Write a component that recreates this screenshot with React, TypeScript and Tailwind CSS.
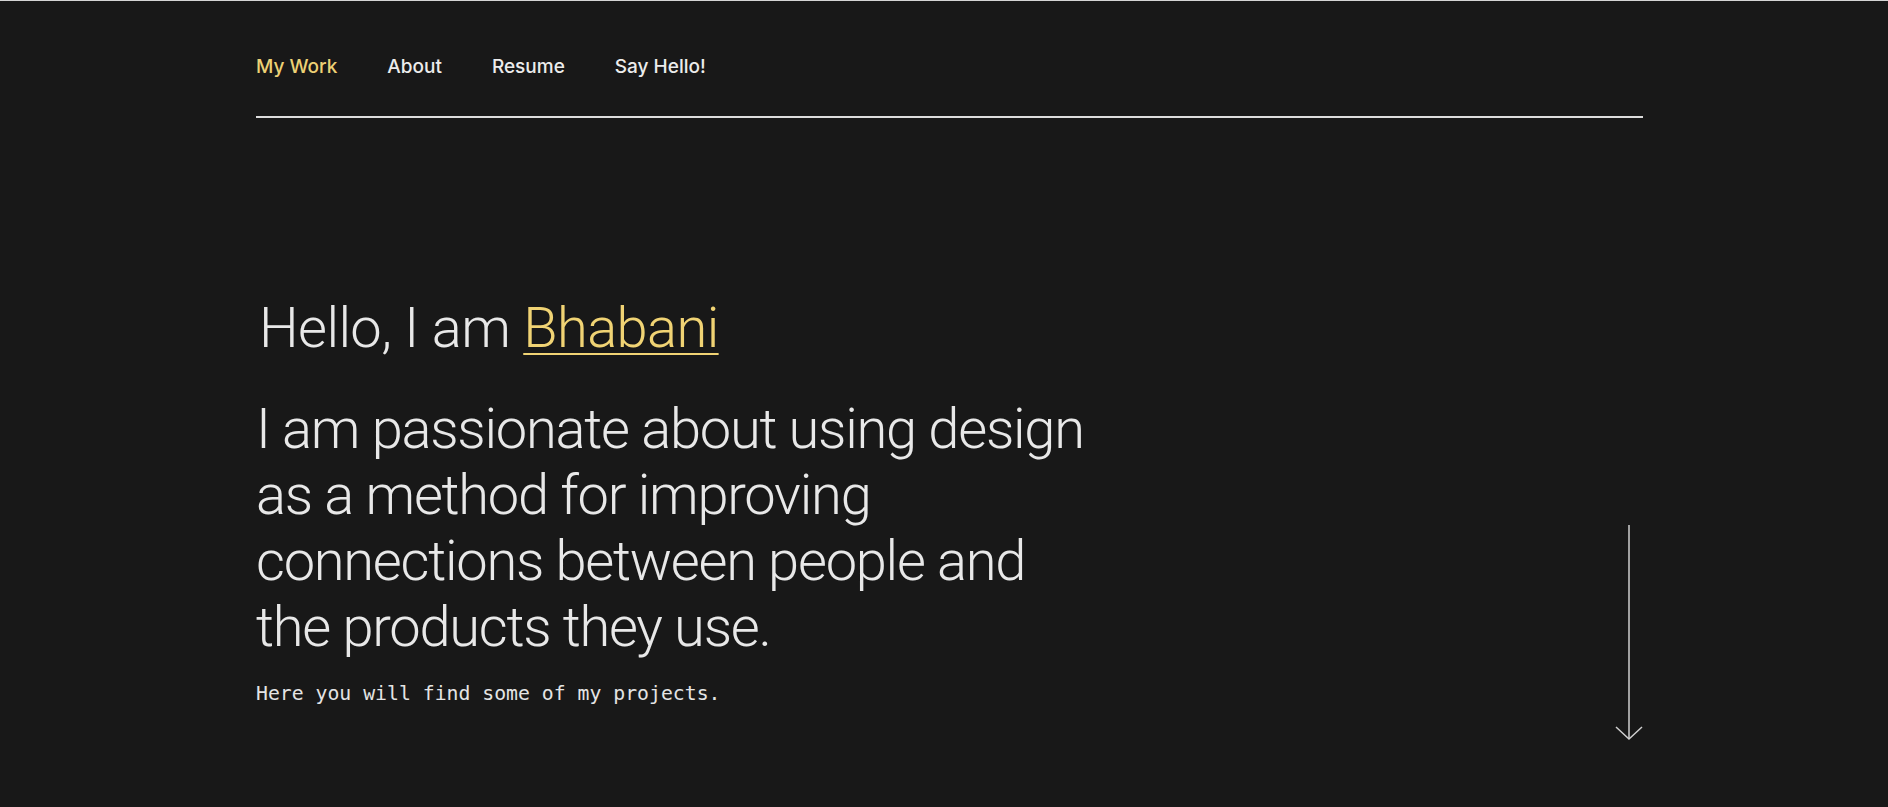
export default function App() {
  return (
    <div className="min-h-screen w-full bg-[#181818] border-t border-[#d4d4d4] font-['Roboto',sans-serif]">
      <div className="ml-[256px] w-[1387px]">
        <nav className="flex gap-[50px] pt-[52px] pb-[35px] border-b-2 border-[#dcdcdc] font-['Inter',sans-serif] text-[19px] leading-[28px] font-medium">
          <a className="text-[#ecd175]">My Work</a>
          <a className="text-[#ececec]">About</a>
          <a className="text-[#ececec]">Resume</a>
          <a className="text-[#ececec]">Say Hello!</a>
        </nav>
        <div className="flex justify-between">
          <div className="pt-[177px]">
            <h1 className="text-[56px] leading-[66px] font-light tracking-[-0.6px] text-[#e8e8e8] pl-[3px]">
              Hello, I am{" "}
              <span className="text-[#f0d374] underline decoration-2 underline-offset-[6px]">Bhabani</span>
            </h1>
            <p className="mt-[35px] text-[56px] leading-[66px] font-light tracking-[-1.25px] text-[#e8e8e8]">
              I am passionate about using design
              <br />
              as a method for improving
              <br />
              connections between people and
              <br />
              the products they use.
            </p>
            <p className="mt-[20px] font-['DejaVu_Sans_Mono',monospace] text-[19.8px] leading-[28px] text-[#e4e4e4]">
              Here you will find some of my projects.
            </p>
          </div>
          <svg
            className="mt-[407px] shrink-0"
            width="28"
            height="216"
            viewBox="0 0 28 216"
            fill="none"
            stroke="#cfcfcf"
            strokeWidth="1.5"
          >
            <line x1="14" y1="0" x2="14" y2="214" />
            <polyline points="1,202 14,214 27,202" />
          </svg>
        </div>
      </div>
    </div>
  );
}
